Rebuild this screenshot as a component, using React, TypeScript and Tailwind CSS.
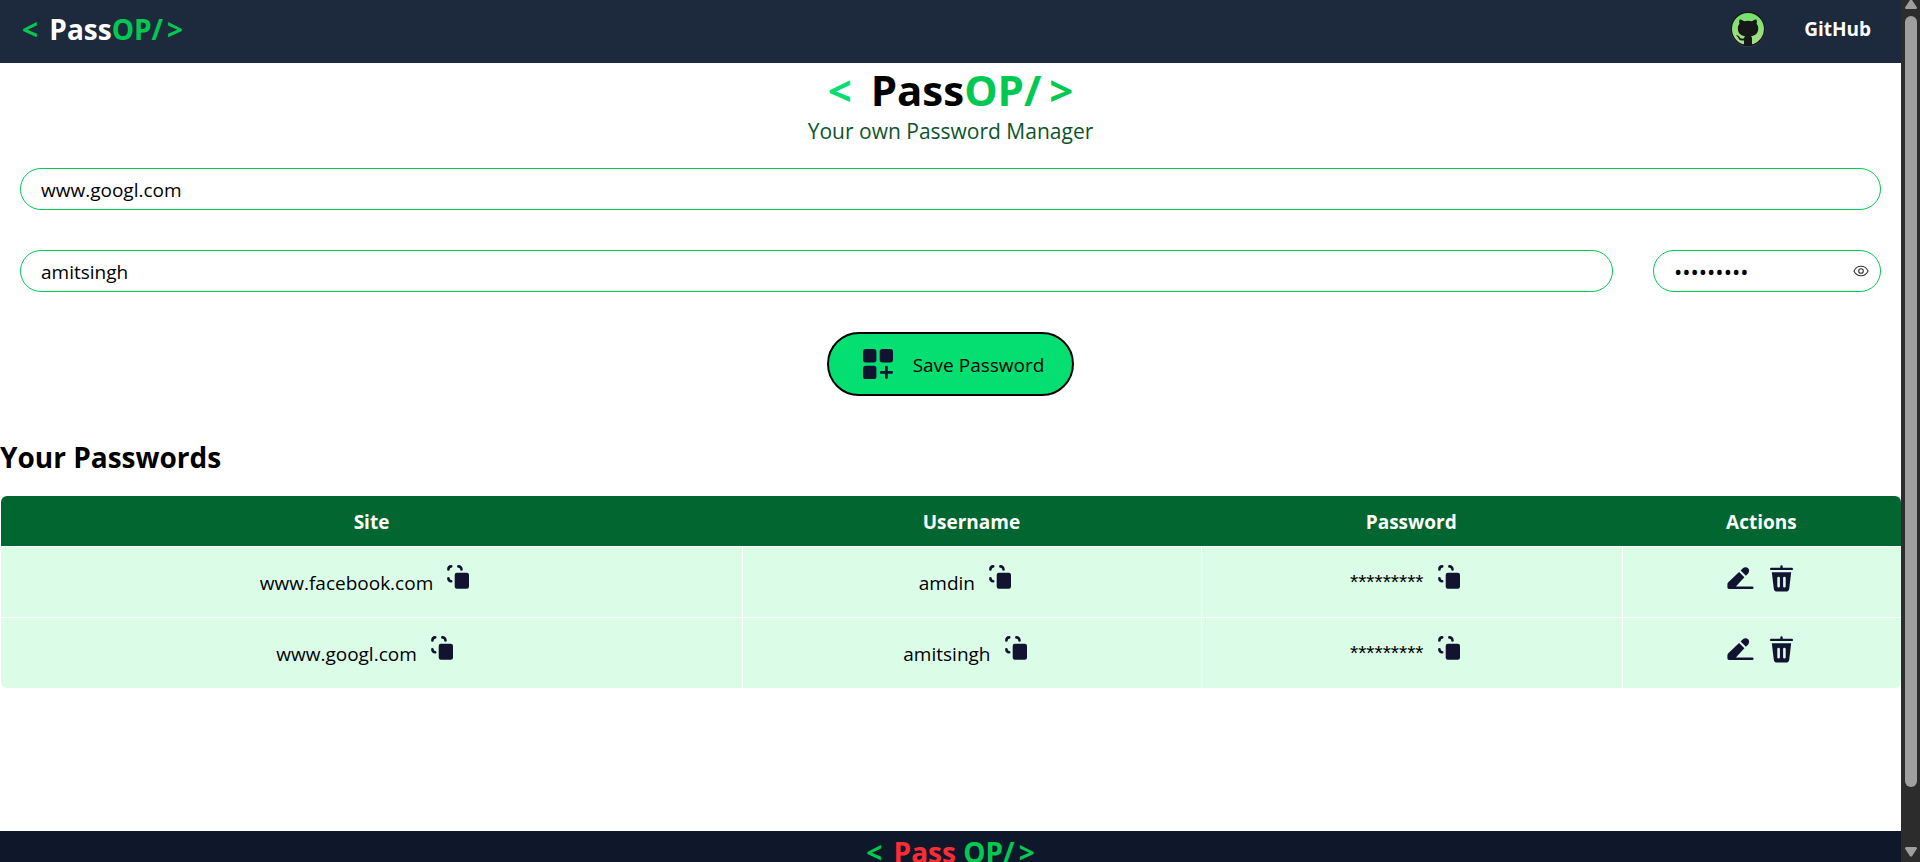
import React, { useState } from "react";

type Entry = { id: number; site: string; username: string; password: string };

const initialEntries: Entry[] = [
  { id: 1, site: "www.facebook.com", username: "amdin", password: "*********" },
  { id: 2, site: "www.googl.com", username: "amitsingh", password: "*********" },
];

function GithubMark() {
  return (
    <svg width="36" height="36" viewBox="0 0 36 36" aria-hidden="true">
      <defs>
        <linearGradient id="mark" x1="0" y1="0" x2="0" y2="1">
          <stop offset="0" stopColor="#74e06c" />
          <stop offset="1" stopColor="#a9df86" />
        </linearGradient>
      </defs>
      <circle cx="18" cy="18.5" r="17.5" fill="#3a4150" />
      <circle cx="18" cy="18" r="17.3" fill="#151719" />
      <g transform="translate(2 2)">
        <path
          transform="scale(2)"
          fill="url(#mark)"
          d="M8 0C3.58 0 0 3.58 0 8c0 3.54 2.29 6.53 5.47 7.59.4.07.55-.17.55-.38 0-.19-.01-.82-.01-1.49-2.01.37-2.53-.49-2.69-.94-.09-.23-.48-.94-.82-1.13-.28-.15-.68-.52-.01-.53.63-.01 1.08.58 1.23.82.72 1.21 1.87.87 2.33.66.07-.52.28-.87.51-1.07-1.78-.2-3.64-.89-3.64-3.95 0-.87.31-1.59.82-2.15-.08-.2-.36-1.02.08-2.12 0 0 .67-.21 2.2.82.64-.18 1.32-.27 2-.27.68 0 1.36.09 2 .27 1.53-1.04 2.2-.82 2.2-.82.44 1.1.16 1.92.08 2.12.51.56.82 1.27.82 2.15 0 3.07-1.87 3.75-3.65 3.95.29.25.54.73.54 1.48 0 1.07-.01 1.93-.01 2.2 0 .21.15.46.55.38A8.013 8.013 0 0 0 16 8c0-4.42-3.58-8-8-8z"
        />
      </g>
    </svg>
  );
}

function CopyIcon() {
  return (
    <svg width="22" height="24" viewBox="0 0 22 24" aria-hidden="true">
      <rect x="7.7" y="7.7" width="14.3" height="16.1" rx="2.2" fill="#121331" />
      <g fill="none" stroke="#121331" strokeWidth="2.6" strokeLinecap="round">
        <path d="M1.4 4.4A3 3 0 0 1 4.2 1.4" />
        <path d="M11.4 1.4A3 3 0 0 1 14.5 4.4" />
        <path d="M1.4 13.200A3 3 0 0 0 4.2 16.200" />
      </g>
    </svg>
  );
}

function EditIcon() {
  return (
    <svg width="27" height="22" viewBox="0 0 27 22" aria-hidden="true" fill="#121331">
      <path d="M12.1 5.1L17.4 10.2L8.9 19.4H25.3A1.2 1.2 0 0 1 25.3 21.9H2A1.6 1.6 0 0 1 .4 20.3V17.4C.4 16.6 .7 15.9 1.3 15.3Z" />
      <path d="M13.6 3.6L15.6 1.5A4.2 4.2 0 0 1 21.4 1.6A4.1 4.1 0 0 1 21.1 6.4L18.9 8.7Z" />
    </svg>
  );
}

function TrashIcon() {
  return (
    <svg width="23" height="27" viewBox="0 0 23 27" aria-hidden="true" fill="#121331">
      <path d="M11.5 .3A1.2 1.2 0 0 1 12.7 1.5V2.7H21.8A1.2 1.2 0 0 1 21.8 5.1H1.2A1.2 1.2 0 0 1 1.2 2.7H10.3V1.5A1.2 1.2 0 0 1 11.5 .3Z" />
      <path
        fillRule="evenodd"
        d="M1.8 7.2H21.2L19.2 23.8A3.2 3.2 0 0 1 16 26.6H7A3.2 3.2 0 0 1 3.8 23.8ZM8.6 11.7A1.3 1.3 0 0 0 7.3 13V21.2A1.3 1.3 0 0 0 9.9 21.2V13A1.3 1.3 0 0 0 8.6 11.7ZM14.4 11.7A1.3 1.3 0 0 0 13.1 13V21.2A1.3 1.3 0 0 0 15.7 21.2V13A1.3 1.3 0 0 0 14.4 11.7Z"
      />
    </svg>
  );
}

function AddIcon() {
  return (
    <svg width="30" height="30" viewBox="0 0 30 30" aria-hidden="true" fill="#121331">
      <rect x="0" y="0" width="13.4" height="13.4" rx="2.6" />
      <rect x="16.7" y="0" width="13.3" height="13.4" rx="2.6" />
      <rect x="0" y="16.7" width="13.4" height="13.3" rx="2.6" />
      <path d="M23.4 18.2V28.6M18.2 23.4H28.6" stroke="#121331" strokeWidth="2.8" strokeLinecap="round" />
    </svg>
  );
}

function EyeIcon() {
  return (
    <svg width="16" height="12" viewBox="0 0 16 12" aria-hidden="true" fill="none" stroke="#333" strokeWidth="1.1">
      <path d="M1 6C2.4 2.8 5 1.2 8 1.2S13.6 2.8 15 6C13.6 9.2 11 10.8 8 10.8S2.4 9.2 1 6Z" />
      <circle cx="8" cy="6" r="2.3" />
    </svg>
  );
}

function CopyCell({ text, masked = false }: { text: string; masked?: boolean }) {
  return (
    <td className="border-t border-l border-white p-0 first:border-l-0">
      <div className="flex h-[70px] items-center justify-center">
        {masked ? (
          <span className="font-['Liberation_Sans',Arial,sans-serif] text-[21px] leading-[30px]">{text}</span>
        ) : (
          <span className="pt-0.5">{text}</span>
        )}
        <button type="button" aria-label="Copy" className="mr-3.5 ml-3.5 cursor-pointer pb-2.5">
          <CopyIcon />
        </button>
      </div>
    </td>
  );
}

function Scrollbar() {
  return (
    <div aria-hidden="true" className="flex w-[19px] shrink-0 flex-col items-center bg-[#2c2c2c]">
      <svg width="12" height="16" viewBox="0 0 12 16" fill="#9f9f9f">
        <path d="M5 0H7L12 7.5Q12 9 10.800 9H1.200Q0 9 0 7.500Z" />
      </svg>
      <div className="w-3 flex-1 rounded-full bg-[#9f9f9f]" />
      <svg className="mt-[60px] mb-[5px]" width="12" height="10" viewBox="0 0 12 10" fill="#9f9f9f">
        <path d="M1.200 0H10.800Q12 0 12 1.500L7 9.200Q6 10 5 9.200L0 1.500Q0 0 1.200 0Z" />
      </svg>
    </div>
  );
}

const field = "h-[42px] w-full rounded-full border border-green-500 bg-white px-5 pt-0.5 text-black outline-none";

export default function App() {
  const [entries, setEntries] = useState(initialEntries);
  const [visible, setVisible] = useState(false);

  return (
    <div className="flex h-screen overflow-hidden bg-white font-['Open_Sans','Noto_Sans',sans-serif] text-[19px] leading-[30px] text-black">
      <div className="min-w-0 flex-1 overflow-hidden">
        <header className="flex h-[63px] items-center justify-between bg-slate-800 pr-[30px] pl-[22px] text-white">
          <div className="pb-1 text-[28px] leading-[35px] font-bold">
            <span className="mr-1 text-green-500">&lt; </span>
            <span>Pass</span>
            <span className="text-green-500">OP/</span>
            <span className="ml-1 text-green-500">&gt;</span>
          </div>
          <a href="#github" className="flex items-center gap-[38px] pb-1.5 font-bold">
            <GithubMark />
            <span>GitHub</span>
          </a>
        </header>

        <main className="min-h-[calc(100vh-94px)]">
          <h1 className="text-center text-[42px] leading-[54px] font-bold">
            <span className="mr-2 text-green-400">&lt; </span>
            <span>Pass</span>
            <span className="text-green-500">OP/</span>
            <span className="ml-2 text-green-500">&gt;</span>
          </h1>
          <p className="pb-[3px] text-center text-[21px] leading-7 text-green-900">Your own Password Manager</p>

          <form className="flex flex-col items-center gap-10 p-5" onSubmit={(e) => e.preventDefault()}>
            <input className={field} type="text" aria-label="Website URL" defaultValue="www.googl.com" />
            <div className="flex w-full gap-10">
              <input className={field} type="text" aria-label="Username" defaultValue="amitsingh" />
              <div className="relative w-[228px] shrink-0">
                <input
                  className="h-[42px] w-full rounded-full border border-green-500 bg-white pr-10 pl-5 text-[22px] text-black outline-none"
                  type={visible ? "text" : "password"}
                  aria-label="Password"
                  defaultValue="amitsingh"
                />
                <button
                  type="button"
                  aria-label="Show password"
                  onClick={() => setVisible(!visible)}
                  className="absolute inset-y-0 right-3 flex cursor-pointer items-center"
                >
                  <EyeIcon />
                </button>
              </div>
            </div>
            <button
              type="submit"
              className="flex h-16 cursor-pointer items-center gap-5 rounded-full border-2 border-black bg-green-400 pr-7 pl-[34px]"
            >
              <AddIcon />
              <span className="pt-0.5">Save Password</span>
            </button>
          </form>

          <h2 className="pt-[21px] pb-[19px] text-[28px] leading-10 font-bold">Your Passwords</h2>

          <div className="ml-px overflow-hidden rounded-md">
            <table className="w-full table-fixed border-separate border-spacing-0">
              <colgroup>
                <col className="w-[39%]" />
                <col className="w-[24.15%]" />
                <col className="w-[22.15%]" />
                <col />
              </colgroup>
              <thead className="bg-[#016630] text-white">
                <tr>
                  <th className="pt-[11px] pb-[9px] font-bold">Site</th>
                  <th className="pt-[11px] pb-[9px] font-bold">Username</th>
                  <th className="pt-[11px] pb-[9px] font-bold">Password</th>
                  <th className="pt-[11px] pb-[9px] font-bold">Actions</th>
                </tr>
              </thead>
              <tbody className="bg-green-100">
                {entries.map((entry) => (
                  <tr key={entry.id}>
                    <CopyCell text={entry.site} />
                    <CopyCell text={entry.username} />
                    <CopyCell text={entry.password} masked />
                    <td className="border-t border-l border-white p-0">
                      <div className="flex h-[70px] items-center justify-center gap-4 pr-1">
                        <button type="button" aria-label="Edit" className="cursor-pointer pb-2">
                          <EditIcon />
                        </button>
                        <button
                          type="button"
                          aria-label="Delete"
                          className="cursor-pointer pb-[7px]"
                          onClick={() => setEntries(entries.filter((e) => e.id !== entry.id))}
                        >
                          <TrashIcon />
                        </button>
                      </div>
                    </td>
                  </tr>
                ))}
              </tbody>
            </table>
          </div>
        </main>

        <footer className="flex h-[75px] flex-col items-center bg-slate-900 pt-1">
          <div className="text-[28px] leading-[35px] font-bold">
            <span className="mr-1 text-green-500">&lt; </span>
            <span className="text-red-500">Pass </span>
            <span className="text-green-500">OP/</span>
            <span className="ml-1 text-green-500">&gt;</span>
          </div>
        </footer>
      </div>
      <Scrollbar />
    </div>
  );
}
